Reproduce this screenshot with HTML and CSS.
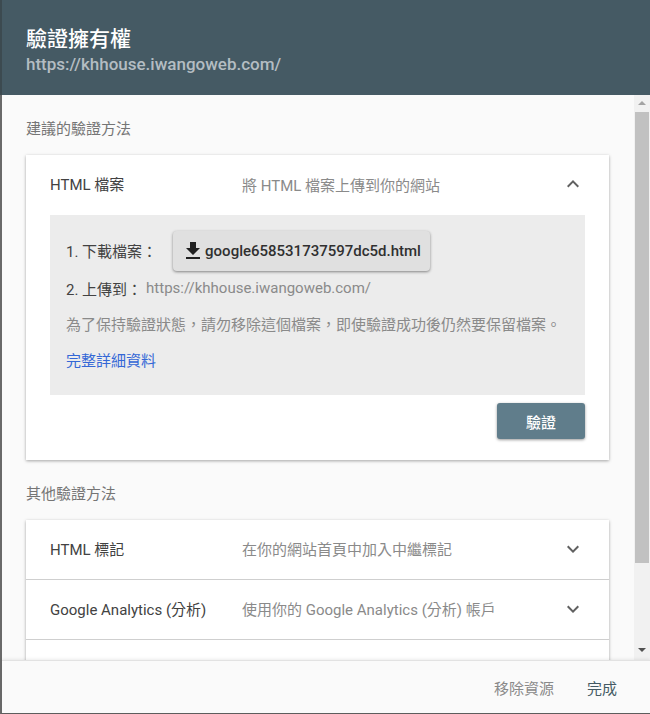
FILE: index.html
```html
<!DOCTYPE html>
<html lang="zh-Hant">
<head>
    <meta charset="UTF-8">
    <meta name="viewport" content="width=device-width, initial-scale=1.0">
    <title>驗證擁有權</title>
    <link rel="stylesheet" href="styles.css">
</head>
<body>
    <div class="dialog">
        <header class="dialog-header">
            <h1 class="dialog-title">驗證擁有權</h1>
            <div class="dialog-url">https://khhouse.iwangoweb.com/</div>
        </header>

        <div class="dialog-body">
            <main class="methods">
                <h2 class="section-title">建議的驗證方法</h2>
                <section class="card">
                    <div class="row">
                        <div class="row-name">HTML 檔案</div>
                        <div class="row-desc">將 HTML 檔案上傳到你的網站</div>
                        <svg class="chevron" viewBox="0 0 24 24"><path d="M7.41 15.41 12 10.83l4.59 4.58L18 14l-6-6-6 6z"/></svg>
                    </div>
                    <div class="panel">
                        <div class="step step-download">
                            <span class="step-label">1. 下載檔案：</span>
                            <a class="download-btn" href="javascript:;">
                                <svg class="download-icon" viewBox="0 0 24 24"><path d="M19 9h-4V3H9v6H5l7 7 7-7zM5 18v2h14v-2H5z"/></svg>
                                google658531737597dc5d.html
                            </a>
                        </div>
                        <div class="step step-upload">
                            <span class="step-label">2. 上傳到：</span>
                            <span class="step-label muted">https://khhouse.iwangoweb.com/</span>
                        </div>
                        <p class="note">為了保持驗證狀態，請勿移除這個檔案，即使驗證成功後仍然要保留檔案。</p>
                        <a class="details" href="javascript:;">完整詳細資料</a>
                    </div>
                    <div class="card-actions">
                        <a class="verify-btn" href="javascript:;">驗證</a>
                    </div>
                </section>

                <h2 class="section-title section-other">其他驗證方法</h2>
                <section class="card card-list">
                    <div class="row row-line">
                        <div class="row-name">HTML 標記</div>
                        <div class="row-desc">在你的網站首頁中加入中繼標記</div>
                        <svg class="chevron" viewBox="0 0 24 24"><path d="M16.59 8.59 12 13.17 7.41 8.59 6 10l6 6 6-6z"/></svg>
                    </div>
                    <div class="row row-line">
                        <div class="row-name">Google Analytics (分析)</div>
                        <div class="row-desc">使用你的 Google Analytics (分析) 帳戶</div>
                        <svg class="chevron" viewBox="0 0 24 24"><path d="M16.59 8.59 12 13.17 7.41 8.59 6 10l6 6 6-6z"/></svg>
                    </div>
                    <div class="row"></div>
                </section>
            </main>

            <div class="scrollbar">
                <span class="arrow arrow-up"></span>
                <div class="thumb"></div>
                <span class="arrow arrow-down"></span>
            </div>
        </div>

        <footer class="dialog-footer">
            <a class="footer-btn footer-remove" href="javascript:;">移除資源</a>
            <a class="footer-btn footer-done" href="javascript:;">完成</a>
        </footer>
    </div>
</body>
</html>
```

FILE: styles.css
```css
* {
    margin: 0;
    padding: 0;
    box-sizing: border-box;
}

html, body {
    height: 100%;
    overflow: hidden;
}

body {
    background: #fafafa;
    font-family: Roboto, "Noto Sans CJK TC", sans-serif;
    font-size: 15px;
    color: #424242;
}

a {
    text-decoration: none;
}

.dialog {
    display: flex;
    flex-direction: column;
    width: 650px;
    height: 714px;
    border-left: 2px solid #6a6a6a;
    border-bottom: 1px solid #5f5f5f;
}

/* header */
.dialog-header {
    flex: none;
    height: 95px;
    margin-left: -2px;
    padding: 26px 0 0 26px;
    background: #455a64;
    border-left: 2px solid #3c4a50;
}

.dialog-title {
    margin-left: -2px;
    font-size: 21px;
    line-height: 26px;
    font-weight: 500;
    color: #fff;
}

.dialog-url {
    margin-left: -2px;
    padding-top: 1px;
    font-size: 17px;
    line-height: 22px;
    font-weight: 500;
    color: #b4bdc2;
}

/* body */
.dialog-body {
    flex: 1;
    display: flex;
    min-height: 0;
    overflow: hidden;
}

.methods {
    flex: 1;
    min-width: 0;
    padding: 0 25px 0 24px;
}

.section-title {
    height: 60px;
    padding-top: 24px;
    font-size: 15px;
    line-height: 20px;
    font-weight: 400;
    color: #757575;
}

.card {
    background: #fff;
    box-shadow: 0 1px 3px rgba(0, 0, 0, 0.35);
}

.row {
    display: flex;
    align-items: center;
    height: 60px;
    padding: 0 24px;
}

.row-line {
    border-bottom: 1px solid #cfcfcf;
}

.row-name {
    flex: none;
    width: 192px;
    margin-top: -3px;
    color: #424242;
}

.row-desc {
    flex: 1;
    margin-top: -2px;
    color: #8a8a8a;
}

.chevron {
    flex: none;
    width: 24px;
    height: 24px;
    margin-top: -2px;
    fill: #616161;
}

/* grey panel */
.panel {
    height: 180px;
    margin: 0 24px;
    padding: 16px 16px 0;
    background: #ececec;
}

.step {
    display: flex;
    align-items: center;
}

.step-download {
    height: 40px;
}

.step-upload {
    margin-top: 8px;
    height: 20px;
}

.step-label {
    margin-top: -2px;
}

.download-btn {
    display: flex;
    align-items: center;
    height: 40px;
    margin-left: 16px;
    padding: 0 9px 0 8px;
    border-radius: 4px;
    background: #e0e0e0;
    box-shadow: 0 1px 3px rgba(0, 0, 0, 0.45);
    color: #303030;
    font-weight: 500;
}

.download-icon {
    width: 24px;
    height: 24px;
    fill: #212121;
}

.muted {
    margin-left: 4px;
    color: #8a8a8a;
}

.note {
    margin-top: 16px;
    line-height: 20px;
    color: #8a8a8a;
}

.details {
    display: block;
    margin-top: 16px;
    line-height: 20px;
    color: #3367d6;
}

.card-actions {
    display: flex;
    justify-content: flex-end;
    height: 65px;
    padding: 8px 24px 0 0;
}

.verify-btn {
    display: flex;
    align-items: center;
    justify-content: center;
    width: 88px;
    height: 36px;
    border-radius: 3px;
    background: #607d8b;
    box-shadow: 0 1px 3px rgba(0, 0, 0, 0.4);
    color: #fff;
    font-weight: 500;
}

/* fake scrollbar */
.scrollbar {
    flex: none;
    display: flex;
    flex-direction: column;
    align-items: center;
    width: 16px;
    background: #f1f1f1;
}

.thumb {
    width: 14px;
    height: 451px;
    margin-top: 7px;
    background: #c1c1c1;
}

.arrow {
    width: 0;
    height: 0;
    border-left: 4px solid transparent;
    border-right: 4px solid transparent;
}

.arrow-up {
    margin-top: 6px;
    border-bottom: 4px solid #a3a3a3;
}

.arrow-down {
    margin-top: 85px;
    border-top: 4px solid #505050;
}

/* footer */
.dialog-footer {
    position: relative;
    flex: none;
    display: flex;
    align-items: center;
    justify-content: flex-end;
    height: 53px;
    padding-right: 33px;
    background: #fafafa;
    border-top: 1px solid #e2e2e2;
    box-shadow: 0 -1px 3px rgba(0, 0, 0, 0.08);
}

.footer-btn {
    font-size: 15px;
}

.footer-remove {
    color: #8a8a8a;
}

.footer-done {
    margin-left: 33px;
    color: #455a64;
}
```
